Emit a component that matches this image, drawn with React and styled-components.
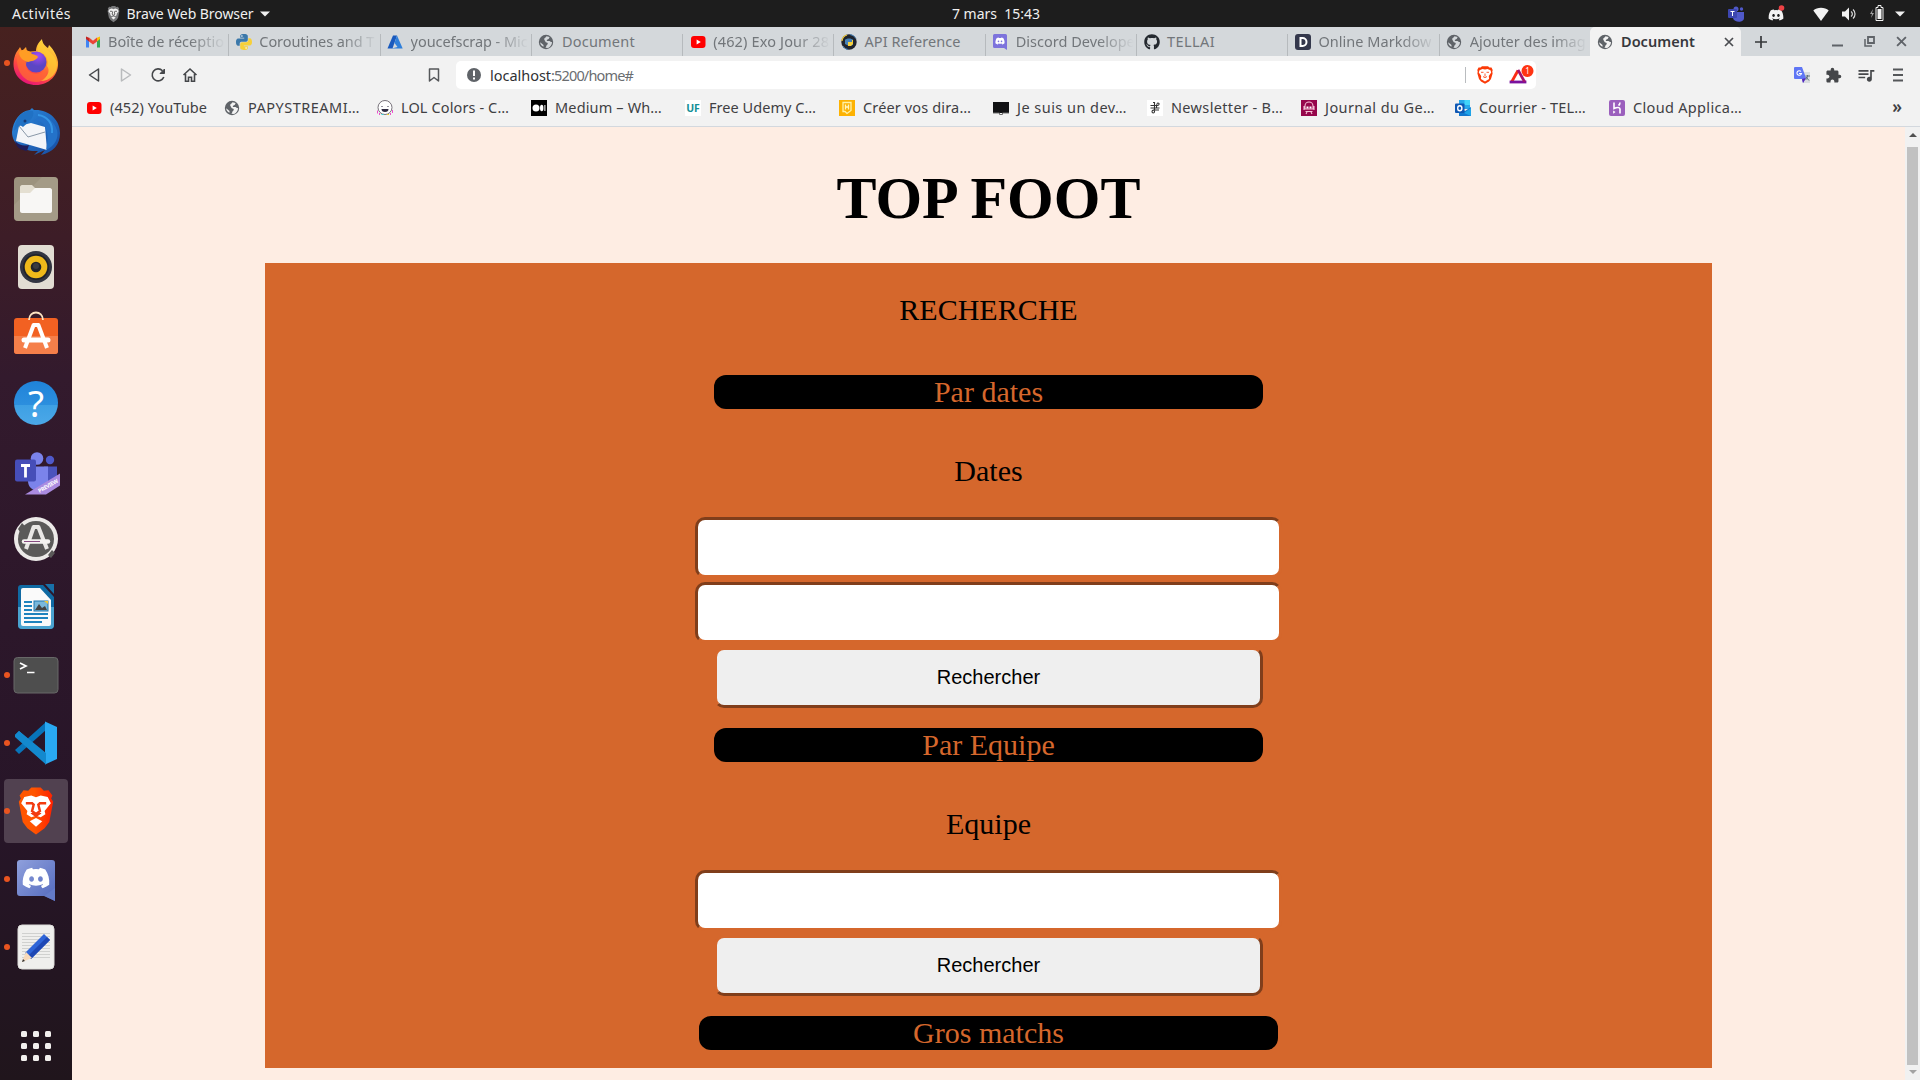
import React, { useLayoutEffect, useRef, useState } from "react";
import styled, { createGlobalStyle, css } from "styled-components";
import { FaDiscord, FaGithub } from "react-icons/fa";
import { MdExtension, MdQueueMusic } from "react-icons/md";

const GlobalStyle = createGlobalStyle`
  * { box-sizing: border-box; }
  body { margin: 0; overflow: hidden; background: #1d1d1d; }
`;

const uiFont = `"Noto Sans", "Open Sans", sans-serif`;
const orange = "#d5672c";
const shade = "#803e1b";

const Desktop = styled.div`
  width: 1920px;
  height: 1080px;
  display: grid;
  grid-template-rows: 27px 1fr;
  font-family: ${uiFont};
  overflow: hidden;
  svg { display: block; flex: none; }
`;

/* ---------- Fitted label ---------- */
const LabelText = styled.span`
  display: inline-block;
  white-space: pre;
  flex: none;
`;

function Label({ width, children }) {
  const ref = useRef(null);
  const [tracking, setTracking] = useState(0);
  useLayoutEffect(() => {
    const natural = ref.current.getBoundingClientRect().width;
    setTracking((width - natural) / children.length);
  }, [width, children]);
  return (
    <LabelText ref={ref} style={{ letterSpacing: tracking }}>
      {children}
    </LabelText>
  );
}

/* ---------- Top bar ---------- */
const TopBar = styled.header`
  display: grid;
  grid-template-columns: 952px 1fr auto;
  align-items: center;
  background: #1d1d1d;
  color: #f0f0f0;
  font-size: 14px;
  line-height: 26px;
`;
const TopLeft = styled.div`
  display: flex;
  align-items: center;
  padding-left: 12px;
`;
const AppMenu = styled.div`
  display: flex;
  align-items: center;
  gap: 6.5px;
  margin-left: 36px;
`;
const Tray = styled.div`
  display: flex;
  align-items: center;
  padding-right: 15px;
`;
const TraySlot = styled.div`
  width: ${(p) => p.$w}px;
  display: flex;
`;

/* ---------- Dock ---------- */
const Body = styled.div`
  display: grid;
  grid-template-columns: 72px 1fr;
  min-height: 0;
`;
const Dock = styled.nav`
  display: flex;
  flex-direction: column;
  padding-top: 2px;
  background: linear-gradient(#47211f 0, #3d1d27 210px, #331a2d 350px, #2c172a 600px, #271528 800px, #20151c 1053px);
`;
const DockItem = styled.div`
  position: relative;
  height: 68px;
  display: flex;
  align-items: center;
  justify-content: center;
  ${(p) =>
    p.$active &&
    css`
      height: 64px;
      margin: 2px 4px;
      border-radius: 4px;
      background: #514150;
    `}
`;
const RunningDot = styled.i`
  position: absolute;
  left: ${(p) => (p.$active ? 0 : 4)}px;
  width: 6px;
  height: 6px;
  border-radius: 50%;
  background: #e95420;
`;
const AppsButton = styled.div`
  display: grid;
  grid-template-columns: repeat(3, 6px);
  grid-auto-rows: 6px;
  gap: 6px;
  justify-content: center;
  margin-top: 50px;
  i { background: #f2f0ee; border-radius: 1.5px; }
`;

/* ---------- Browser ---------- */
const Browser = styled.main`
  display: grid;
  grid-template-rows: 29px 38px 33px 1fr;
  min-width: 0;
  min-height: 0;
  background: #f2f2f2;
`;
const TabStrip = styled.div`
  display: flex;
  background: #d4d8db;
  padding-left: 5px;
  font-size: 14.5px;
  color: #72767a;
`;
const TabBox = styled.div`
  display: flex;
  align-items: center;
  width: 151.3px;
  padding: 0 0 0 7.5px;
  gap: 7.5px;
  position: relative;
  border-radius: ${(p) => (p.$active ? "5px 5px 0 0" : 0)};
  background: ${(p) => (p.$active ? "#f2f2f2" : "transparent")};
  color: ${(p) => (p.$active ? "#37383d" : "inherit")};
  font-weight: ${(p) => (p.$active ? 600 : 400)};
  &::after {
    content: "";
    position: absolute;
    right: -1px;
    top: 7px;
    bottom: 0;
    width: ${(p) => (p.$bare ? 0 : 1)}px;
    background: #b6babd;
  }
`;
const TabTitle = styled.div`
  flex: 1;
  white-space: nowrap;
  line-height: 22px;
  padding-bottom: 2px;
  ${(p) => p.$fade && css`mask-image: linear-gradient(90deg, #000 68%, transparent 98%);`}
`;
const CloseSlot = styled.div`
  margin-right: 7px;
`;
const StripRight = styled.div`
  flex: 1;
  display: flex;
  align-items: center;
  justify-content: space-between;
  padding: 0 13px 0 13px;
`;
const WindowButtons = styled.div`
  display: flex;
  align-items: center;
  gap: 21px;
`;

const Toolbar = styled.div`
  display: flex;
  align-items: center;
  padding-left: 14px;
`;
const NavButtons = styled.div`
  display: flex;
  gap: 16px;
  flex: 1;
`;
const BookmarkButton = styled.div`
  margin-right: 14px;
`;
const AddressBar = styled.div`
  width: 1080px;
  height: 28px;
  display: flex;
  align-items: center;
  padding: 0 2px 0 10px;
  border-radius: 5px;
  background: #fff;
  font-size: 14.5px;
  color: #6a6d70;
  b { color: #303134; font-weight: 400; }
`;
const UrlText = styled.div`
  flex: 1;
  margin-left: 8px;
  padding-bottom: 1px;
`;
const Divider = styled.i`
  width: 1px;
  height: 16px;
  background: #b9bcbf;
  margin-right: 11px;
`;
const ShieldSlot = styled.div`
  margin-right: 16px;
`;
const Extensions = styled.div`
  display: grid;
  grid-template-columns: repeat(4, 16px);
  gap: 16px;
  align-items: center;
  justify-items: center;
  margin-left: 257.5px;
  width: 126.5px;
  color: #45474a;
`;

const BookmarkBar = styled.div`
  display: flex;
  align-items: center;
  padding: 0 18px 4px 14px;
  border-bottom: 1px solid #d3d8de;
  font-size: 14.5px;
  line-height: 22px;
  color: #3f4043;
`;
const Bookmark = styled.div`
  display: flex;
  align-items: center;
  gap: 8px;
  width: ${(p) => p.$w || 154}px;
  span { padding-bottom: 2px; }
`;
const More = styled.div`
  margin-left: auto;
  padding-bottom: 2px;
  font-size: 17px;
  font-weight: 600;
`;

/* ---------- Page ---------- */
const Viewport = styled.div`
  display: grid;
  grid-template-columns: 1fr 15px;
  min-height: 0;
  background: #feede3;
`;
const Page = styled.div`
  font-family: "Liberation Serif", "Times New Roman", serif;
  color: #000;
  padding-top: 37px;
  text-align: center;
`;
const Title = styled.h1`
  margin: 0 0 31px;
  font-size: 60px;
  line-height: 68px;
`;
const Panel = styled.section`
  width: 1447px;
  height: 805px;
  margin: 0 auto;
  padding-top: 30px;
  background: ${orange};
  display: flex;
  flex-direction: column;
  align-items: center;
  font-size: 30px;
  line-height: 34px;
`;
const Caption = styled.p`
  margin: ${(p) => p.$m || "45px 0 29px"};
`;
const Bar = styled.div`
  width: ${(p) => (p.$wide ? 579 : 549)}px;
  height: 34px;
  border-radius: 12px;
  background: #000;
  color: ${orange};
`;
const Form = styled.form`
  display: flex;
  flex-direction: column;
  align-items: center;
  gap: 4px;
  margin-bottom: 20px;
`;
const Field = styled.input`
  width: 587px;
  height: 61px;
  border: 3px solid;
  border-color: ${shade} ${orange} ${orange} ${shade};
  border-radius: 10px;
  background: #fff;
  outline: 0;
`;
const Submit = styled.button`
  width: 549px;
  height: 61px;
  border: 3px solid;
  border-color: ${orange} ${shade} ${shade} ${orange};
  border-radius: 10px;
  background: #efefef;
  color: #000;
  padding: 0;
  font: 20px "Liberation Sans", Arial, sans-serif;
`;
const Scrollbar = styled.div`
  display: flex;
  flex-direction: column;
  align-items: center;
  background: #f1f1f1;
`;
const Arrow = styled.i`
  width: 0;
  border: 4px solid transparent;
  border-top-width: ${(p) => (p.$up ? 0 : 4)}px;
  border-bottom-width: ${(p) => (p.$up ? 4 : 0)}px;
  border-${(p) => (p.$up ? "bottom" : "top")}-color: ${(p) => (p.$up ? "#505050" : "#a3a3a3")};
  margin: ${(p) => (p.$up ? "6px 0 10px" : "5px 0 6px")};
`;
const Thumb = styled.div`
  flex: 1;
  width: 11px;
  background: #c1c1c1;
`;

/* ---------- Small icons ---------- */
const Svg = ({ s = 16, w, h, v = "0 0 16 16", children, ...r }) => (
  <svg width={w || s} height={h || s} viewBox={v} fill="none" {...r}>{children}</svg>
);
const Globe = ({ hole = "#f2f2f2" }) => (
  <Svg>
    <circle cx="8" cy="8" r="7.200" fill="#5f6368" />
    <path d="M8.500 2.300c-.3 1.500-2.500 1.200-2.300 3 .2 1.500 1 1.200 1.200 2.400.2 1.100 2.200.3 2.400 1.700.1 1.300-1.300 1.200-1.500 2.500-.1.900-.5 1.500-1.200 1.900l3 .1c2.400-.9 3.900-3 3.900-5.800-1.300.2-1.500-.9-2.600-1.100-1.200-.2-2.200.5-2.600-.4-.3-.9.900-1.100 1.800-1.600.7-.5.600-1.500 1-2z" fill={hole} />
    <path d="M2.200 8.200 5.500 11v1.700C3.500 12 2.200 10.300 2.200 8.200z" fill={hole} />
  </Svg>
);
const Youtube = () => (
  <Svg><rect x="1" y="2" width="14.5" height="12" rx="3" fill="#f00" /><path d="M6.600 5.500v5L10.800 8z" fill="#fff" /></Svg>
);
const Gmail = () => (
  <Svg>
    <path d="M1 4v9.500h3V7z" fill="#4285f4" /><path d="M15 4v9.500h-3V7z" fill="#34a853" />
    <path d="M12 3.700 15 2.500V5l-3 2.600z" fill="#fbbc04" /><path d="M1 2.500 4 3.700v3.900L1 5z" fill="#c5221f" />
    <path d="m4 3.500 4 3.200 4-3.200v4.100l-4 3-4-3z" fill="#ea4335" />
  </Svg>
);
const Python = () => (
  <Svg>
    <path d="M8 0C4 0 4.200 1.800 4.200 1.800v2h4v.6H2.500S0 4.100 0 8s2.200 3.800 2.200 3.800h1.500V10s-.1-2.200 2.100-2.200h3.900s2.100 0 2.100-2V2.200S12 0 8 0z" fill="#3b78aa" />
    <path d="M8 16c4 0 3.800-1.800 3.800-1.800v-2h-4v-.6h5.700S16 11.900 16 8s-2.200-3.800-2.200-3.800h-1.500V6s.1 2.200-2.100 2.200H6.300s-2.100 0-2.100 2v3.600S4 16 8 16z" fill="#f7d038" />
    <circle cx="5.900" cy="2" r=".8" fill="#fff" /><circle cx="10.100" cy="14" r=".8" fill="#fff" />
  </Svg>
);
const Azure = () => (
  <Svg><path d="M6 1.500h4L5.500 14.500H.5z" fill="#195abe" /><path d="M10 1.500 15.700 14.500H4.500l6-1.500L7.500 9z" fill="#2f7fda" /></Svg>
);
const ApiIcon = () => (
  <Svg><circle cx="8" cy="8" r="7.700" fill="#20242d" /><path d="M2 12a7 7 0 0 0 5 3.500" stroke="#3775ac" /><path d="M1 7a7 7 0 0 1 5-6" stroke="#f6d03c" strokeWidth="1.200" /><path d="M4 6c1-2 7-2 8 0v5l-4 1-4-2z" fill="#4682b8" /><path d="M7 8h4V6h1v4l-2 2H7z" fill="#f6d03c" /><path d="M9 .5a8 8 0 0 1 6 4" stroke="#4682b8" /></Svg>
);
const DiscordTab = () => (
  <Svg><path d="M1 1.500A1.500 1.500 0 0 1 2.500 0h11A1.500 1.500 0 0 1 15 1.500V16l-3-2H2.500A1.500 1.500 0 0 1 1 12.500z" fill="#7d73dc" /><g transform="translate(3 2)"><FaDiscord size={10} color="#fff" /></g></Svg>
);
const DSquare = () => (
  <Svg><rect width="16" height="16" rx="3" fill="#34384c" /><path d="M5.500 4h2a4 4 0 0 1 0 8h-2z" stroke="#fff" strokeWidth="2" /></Svg>
);
const Lol = () => (
  <Svg><circle cx="8" cy="7.500" r="7" fill="#fff" stroke="#77727a" /><path d="M4.500 9h7a3.500 3 0 0 1-7 0z" fill="#302c42" /><path d="M4.500 6.500h1M10.500 6.500h1" stroke="#302c42" /><path d="M.5 10.500v3M2.500 13v2M13.500 13v2M15.500 10v3" stroke="#ed52ce" /><path d="M4.500 14.500h2" stroke="#35d7db" /><path d="M10 14.500h2" stroke="#e9ce29" /></Svg>
);
const Medium = () => (
  <Svg><rect width="16" height="16" fill="#000" /><circle cx="5" cy="8" r="3.500" fill="#fff" /><ellipse cx="10.700" cy="8" rx="1.700" ry="3.300" fill="#fff" /><path d="M13.900 5v6" stroke="#fff" /></Svg>
);
const UfBadge = styled.div`
  width: 16px;
  height: 16px;
  background: #fff;
  color: #159097;
  font: 700 10.5px/16px "Noto Sans", sans-serif;
  text-align: center;
  flex: none;
`;
const Malt = () => (
  <Svg><rect width="16" height="16" fill="#fdb202" /><path d="M4 2.500h8v8l-4 3-2-2H4z" stroke="#fff2a8" strokeWidth="1.300" /><path d="M6.500 4.500v5M9.500 4.500v5M6.500 7h3" stroke="#fff6c4" strokeWidth="1.300" /></Svg>
);
const Screen = () => (
  <Svg><path d="M0 2h16v11H0z" fill="#111214" /><path d="M0 13h6.500v1.500h3V13H16" stroke="#6c6c6c" /></Svg>
);
const Command = () => (
  <Svg><rect width="16" height="16" fill="#fff" /><path d="M6 2.500h1.500v9c0 2-2.500 2-2.500 0s3-1.500 7-1.500M3.500 5.500h7c2 0 2-2.500.5-2.500S9.500 7 9.500 8H3.500M9 8h3.500" stroke="#333" strokeWidth="1.100" /></Svg>
);
const Geek = () => (
  <Svg><rect width="16" height="16" fill="#96064b" /><path d="M4 6a4 4 0 0 1 8 0v3H4zM3 6v4M13 6v4M4.500 11.500h7M5 14l1-2M11 14l-1-2" stroke="#f5bfd5" strokeWidth="1.100" /><path d="M5.500 7.500h5" stroke="#fff" strokeWidth="2" strokeDasharray="2 1" /></Svg>
);
const Outlook = () => (
  <Svg><path d="M4 0h11v9H4z" fill="#28a8ea" /><path d="M9.500 0H15v5H9.500z" fill="#41d5fa" /><path d="m4 7 6 4 6-4v9H4z" fill="#1278cf" /><path d="m16 8-7 5 7 3z" fill="#1fa4e8" /><rect y="3.500" width="9.500" height="9.500" rx="1" fill="#0f58b4" /><ellipse cx="4.800" cy="8.200" rx="2.100" ry="2.500" stroke="#fff" strokeWidth="1.400" /></Svg>
);
const Heroku = () => (
  <Svg><rect width="16" height="16" rx="2" fill="#9b5fbd" /><path d="M5 2.500v6C8 7 11 7 11 9v4.500M11 2.500c0 1.500-.7 2.400-1.500 3" stroke="#fff" strokeWidth="1.600" /><path d="m4.200 10.500 2.300 1.500-2.300 1.700z" fill="#fff" /></Svg>
);
const lionShield = "M9 1 7 3 4 2.700 1.500 6l.8 2L1 10l2.500 13 3 4L12 31l5.500-4 3-4L23 10l-1.300-2 .8-2L20 2.700 17 3 15 1z";
const lionFace = "M12 7.200 15 6l4.500 1 2 4-4 5 .5 2-3 2-3-1-3 1-3-2 .5-2-4-5 2-4L9 6z";
const LionMark = ({ w, h, fill, face = "#fff", line = "#f23b10" }) => (
  <Svg w={w} h={h} v="0 0 24 32">
    <path d={lionShield} fill={fill} /><path d={lionFace} fill={face} />
    <path d="M5.500 11h4l1 1-1 4 2.500 2 2.500-2-1-4 1-1h4M9 17l3 2 3-2" stroke={line} strokeWidth="1.600" />
    <path d="m12 20.500 4 2-4 3.500-4-3.500z" fill={face} />
  </Svg>
);
const LionSmall = () => (
  <Svg w={16} h={18} v="0 0 16 18">
    <path d="M5 .3h6l1.500 1.200h2L15.700 4l-.4 1.500.3 2L14 13l-2 2.500L8 17.800 4 15.500 2 13 .4 7.500l.3-2L.3 4l1.200-2.500h2z" fill="#fb3a08" />
    <path d="M8 3.500 10.500 3l3 1.200.7 2.300-2.400 3.500.3 3L8 15.500 3.900 13l.3-3-2.400-3.500.7-2.300 3-1.200z" fill="#fff" />
    <path d="M4 6.300h2.500M9.500 6.300H12M8 7.500v3M6 10.500l2 1.200 2-1.200" stroke="#fb4a1c" strokeWidth=".9" />
  </Svg>
);
const Bat = () => (
  <Svg w={25} h={22} v="0 0 25 22">
    <path d="M9 6.500 2.600 18" stroke="#fa2c14" strokeWidth="2.800" />
    <path d="M.6 18h16.800" stroke="#7a129e" strokeWidth="2.800" /><path d="m9 5.800 6.600 12" stroke="#a3126e" strokeWidth="2.800" />
    <circle cx="18.500" cy="7" r="6" fill="#ff3413" />
    <text x="18.500" y="9.800" fill="#fff" fontSize="8" textAnchor="middle" fontFamily="Noto Sans, sans-serif">1</text>
  </Svg>
);
const Caret = () => <Svg w={10} h={6} v="0 0 10 6"><path d="M0 .5h10L5 5.500z" fill="#f0f0f0" /></Svg>;
const Cross = ({ s = 10, c = "#4a4c50" }) => <Svg s={s} v="0 0 10 10"><path d="m1 1 8 8M9 1 1 9" stroke={c} strokeWidth="1.700" /></Svg>;

/* ---------- Dock icons (48px box) ---------- */
const D = ({ children }) => <Svg s={48} v="0 0 48 48">{children}</Svg>;
const Firefox = () => (
  <D>
    <defs>
      <linearGradient id="ff" x1=".8" y1="0" x2=".3" y2="1"><stop stopColor="#ffe94a" /><stop offset=".4" stopColor="#ff9a2a" /><stop offset=".7" stopColor="#ff4a3f" /><stop offset="1" stopColor="#e5117c" /></linearGradient>
      <radialGradient id="ffp" cx=".6" cy=".2"><stop stopColor="#a34bf5" /><stop offset="1" stopColor="#5b46c4" /></radialGradient>
    </defs>
    <path d="M4 14c1-2 3-4 4-6l2 4 4-4 1 4c4 1 6 0 9 0 0-5 3-9 6-12 0 4 3 7 6 9l1-3c3 3 8 9 9 17 1 13-9 23-22 23S1.500 37 1.500 25c0-4 1-8 2.500-11z" fill="url(#ff)" />
    <path d="M30 1c-5 5-5 10-4 12 8 1 11 8 9 14 4 5 0 12-7 15 11 0 17-8 17-16 0-12-13-13-15-25z" fill="#ffce36" opacity=".75" />
    <circle cx="24" cy="23" r="10.500" fill="url(#ffp)" />
    <path d="M5 17c5-2 9 0 12 3-4 3-4 9 0 12 4 4 12 4 16-2 4 5 0 13-9 13C11 43 4 31 5 17z" fill="#ff6a34" opacity=".75" />
    <path d="M7 13c4-4 10-2 13 2 3 1 5 1 6 3-2 4-7 4-10 5-4-1-9-4-9-10z" fill="#ff9d24" />
  </D>
);
const Thunderbird = () => (
  <D>
    <defs><linearGradient id="tb" x1="0" y1="0" x2="1" y2="1"><stop stopColor="#2c8ce0" /><stop offset="1" stopColor="#174ba0" /></linearGradient></defs>
    <path d="M0 25C1 14 8 4 18 3l2-2 2 2c14-1 26 9 26 23 0 12-7 19-19 22l4-5-11 5 4-4C12 45 0 38 0 25z" fill="url(#tb)" />
    <path d="M3 34c5 5 9 5 14 4l-2 6C8 43 4 40 3 34z" fill="#201d58" />
    <path d="M7 19 19 16l14 4 2 23L4 34z" fill="#f3f5f8" /><path d="m7 19 9 11 17-5" stroke="#8998a8" />
    <path d="M2 24C3 9 12 2 21 4c2 5-3 10-10 16l-3-2z" fill="#2071c4" /><circle cx="13" cy="14" r="1.500" fill="#153c78" />
    <path d="M20 15c8-5 20 4 14 28 9-4 13-12 11-20C40 9 28 7 20 15z" fill="#2472c9" />
    <path d="M26 8c9 1 15 8 14 18" stroke="#3596e6" strokeWidth="2" />
  </D>
);
const Files = () => (
  <D><rect x="2" y="2" width="44" height="44" rx="4" fill="#9c937e" /><path d="M2 30 30 2h12a4 4 0 0 1 4 4v36a4 4 0 0 1-4 4H6a4 4 0 0 1-4-4z" fill="#aba38f" opacity=".5" /><path d="M8 12c0-1 1-2 2-2h10l4 4v6H8z" fill="#e4dfd1" /><path d="M8 18h10l5-5h15c1 0 2 1 2 2v21c0 1-1 2-2 2H10c-1 0-2-1-2-2z" fill="#f8f7f5" /></D>
);
const Rhythmbox = () => (
  <D><rect x="6" y="2" width="36" height="44" rx="4" fill="#e2ddd3" /><circle cx="24" cy="24" r="16" fill="#323541" /><circle cx="24" cy="24" r="13" fill="#20222a" /><circle cx="24" cy="24" r="11.300" fill="#efb91a" /><circle cx="24" cy="24" r="5.300" fill="#22242a" /><circle cx="24" cy="23" r="3" fill="#393b40" /></D>
);
const Store = () => (
  <D><rect x="2" y="7" width="44" height="36" rx="3" fill="#f26122" /><path d="M2 25h44v15a3 3 0 0 1-3 3H5a3 3 0 0 1-3-3z" fill="#f57f4a" /><path d="M17 9c0-10 14-10 14 0" stroke="#fde3c2" strokeWidth="1.800" /><path d="m22 13-9 24M26 13l9 24M21 14h6" stroke="#fff" strokeWidth="4" /><path d="M12 29h24" stroke="#fff" strokeWidth="5" strokeLinecap="round" /></D>
);
const HelpGlyph = styled.div`
  width: 44px;
  height: 44px;
  border-radius: 50%;
  background: linear-gradient(#1f83d9 0, #2c8fde 54%, #3ea0e4 55%, #4ba8e8);
  color: #fff;
  font: 37px/43px "Noto Sans", sans-serif;
  text-align: center;
`;
const Teams = () => (
  <D>
    <g transform="translate(0 3.500)">
      <circle cx="25" cy="8" r="6.300" fill="#7b83eb" /><circle cx="38" cy="9.500" r="4.200" fill="#4f59ca" />
      <path d="M32 16h13v14c0 6-5 9-10 9z" fill="#4b53bc" /><path d="M16 16h20v15c0 12-19 13-20 0z" fill="#7b83eb" />
      <rect x="3" y="9" width="21" height="22" rx="2" fill="#464eb8" />
      <path d="M9 15h9M13.500 15v12" stroke="#fff" strokeWidth="2.800" />
      <path d="M13 44 48 23v12L34 44z" fill="#ab8be0" />
      <text transform="translate(27.500 42.500) rotate(-30)" fontFamily="Noto Sans, sans-serif" fontSize="5.500" fontWeight="700" fill="#fff" textLength="22">PREVIEW</text>
    </g>
  </D>
);
const Updater = () => (
  <D><circle cx="24" cy="24" r="22" fill="#eceae8" /><circle cx="24" cy="24" r="18" fill="#5b5a59" /><path d="m6 14 4-6 3 3-5 6zM36 40l4-5 3 3-4 5z" fill="#5b5a59" /><path d="m22 11-8 23M26 11l9 23M21 12h6" stroke="#e9e7e5" strokeWidth="4" /><path d="M12 26.500h24" stroke="#f4f2f0" strokeWidth="4.500" strokeLinecap="round" /><path d="M12 26.500h16" stroke="#864b80" /></D>
);
const Writer = () => (
  <D><path d="M9 2h22l11 12v28a4 4 0 0 1-4 4H10a4 4 0 0 1-4-4V5a3 3 0 0 1 3-3z" fill="#106aa3" /><path d="M6 24h36v18a4 4 0 0 1-4 4H10a4 4 0 0 1-4-4z" fill="#4aa3d0" /><path d="M9 7a2 2 0 0 1 2-2h17l11 12v24a2 2 0 0 1-2 2H11a2 2 0 0 1-2-2z" fill="#fafafa" /><path d="M33 1h9v10z" fill="#1870a8" /><path d="M12 19h8M12 23h8M12 27h8M12 31h24M12 35h24M12 39h18" stroke="#1e83be" strokeWidth="2" /><rect x="22" y="18" width="14" height="10" fill="#79b8dc" stroke="#1e76ad" /><path d="m23 27 4-6 3 4 3-2 2 4z" fill="#444" /><path d="M32 18h4v3z" fill="#f6c933" /></D>
);
const Terminal = () => (
  <D><rect x="2" y="6.500" width="44" height="35.500" rx="3.500" fill="#4e4e4e" stroke="#686868" /><path d="m8 12 6 3-6 3M15 21.500h7.500" stroke="#fff" strokeWidth="1.700" /></D>
);
const Code = () => (
  <D><path d="m3 31 4 4 27-24V3z" fill="#0874ba" /><path d="m3 16 4-4 27 24v9L3 17z" fill="#1595dc" /><path d="M33 2.500 45 8v32l-12 5.500z" fill="#29a9f2" /><path d="M7 12 34 34v11.500L3 18v-2z" fill="#1389ce" /></D>
);
const DiscordDock = () => (
  <D><defs><linearGradient id="dc" x1="0" y1="0" x2="1" y2="1"><stop stopColor="#8fa0dc" /><stop offset="1" stopColor="#5369be" /></linearGradient></defs><path d="M8 5h32a3 3 0 0 1 3 3v38l-10-5H8a3 3 0 0 1-3-3V8a3 3 0 0 1 3-3z" fill="url(#dc)" /><path d="m32 41 11 5V33z" fill="#647bc8" /><g transform="translate(9.500 8.500)"><FaDiscord size={29} color="#fff" /></g></D>
);
const Editor = () => (
  <D><rect x="6" y="2" width="36" height="44" rx="4" fill="#efefed" stroke="#dededb" /><path d="M10 10.500h28M10 13.500h28M10 16.500h28M10 19.500h28M10 22.500h28M10 25.500h28M10 28.500h28M10 31.500h28M10 34.500h28" stroke="#cccdcc" strokeWidth=".9" /><path d="m32 11 6 6-19 19-6-6z" fill="#2e65d8" /><path d="m35 14 3 3-19 19-3-3z" fill="#1d47b4" /><path d="m14 29 6 6-10 4z" fill="#f7d9b9" /><path d="m11 36 2 2-3 1z" fill="#333" /></D>
);
const BraveDock = () => (
  <D><defs><linearGradient id="bv"><stop offset=".45" stopColor="#ff5500" /><stop offset="1" stopColor="#ff2000" /></linearGradient></defs><g transform="translate(3 -1)"><LionMark w={42} h={50} fill="url(#bv)" /></g></D>
);

const dockItems = [
  { icon: <Firefox />, running: true },
  { icon: <Thunderbird /> },
  { icon: <Files /> },
  { icon: <Rhythmbox /> },
  { icon: <Store /> },
  { icon: <HelpGlyph>?</HelpGlyph> },
  { icon: <Teams /> },
  { icon: <Updater /> },
  { icon: <Writer /> },
  { icon: <Terminal />, running: true },
  { icon: <Code />, running: true },
  { icon: <BraveDock />, running: true, active: true },
  { icon: <DiscordDock />, running: true },
  { icon: <Editor />, running: true },
];

const tabs = [
  { icon: <Gmail />, title: "Boîte de réceptio", w: 116, fade: true },
  { icon: <Python />, title: "Coroutines and T", w: 115, fade: true },
  { icon: <Azure />, title: "youcefscrap - Mic", w: 117, fade: true },
  { icon: <Globe hole="#d4d8db" />, title: "Document", w: 73 },
  { icon: <Youtube />, title: "(462) Exo Jour 28", w: 116, fade: true },
  { icon: <ApiIcon />, title: "API Reference", w: 96 },
  { icon: <DiscordTab />, title: "Discord Develope", w: 119, fade: true },
  { icon: <FaGithub size={16} color="#24292f" />, title: "TELLAI", w: 48 },
  { icon: <DSquare />, title: "Online Markdow", w: 113, fade: true },
  { icon: <Globe hole="#d4d8db" />, title: "Ajouter des imag", w: 116, fade: true },
];

const bookmarks = [
  { icon: <Youtube />, title: "(452) YouTube", w: 97, slot: 138 },
  { icon: <Globe />, title: "PAPYSTREAMI…", w: 112, slot: 153 },
  { icon: <Lol />, title: "LOL Colors - C…", w: 108 },
  { icon: <Medium />, title: "Medium – Wh…", w: 107 },
  { icon: <UfBadge>UF</UfBadge>, title: "Free Udemy C…", w: 107 },
  { icon: <Malt />, title: "Créer vos dira…", w: 108 },
  { icon: <Screen />, title: "Je suis un dev…", w: 110 },
  { icon: <Command />, title: "Newsletter - B…", w: 112 },
  { icon: <Geek />, title: "Journal du Ge…", w: 110 },
  { icon: <Outlook />, title: "Courrier - TEL…", w: 107 },
  { icon: <Heroku />, title: "Cloud Applica…", w: 109 },
];

export default function App() {
  return (
    <Desktop>
      <GlobalStyle />
      <TopBar>
        <TopLeft>
          <Label width={59}>Activités</Label>
          <AppMenu>
            <LionMark w={13} h={18} fill="#77787a" face="#f2f2f2" line="#555" />
            <Label width={127}>Brave Web Browser</Label>
            <Caret />
          </AppMenu>
        </TopLeft>
        <div><Label width={88}>{"7 mars  15:43"}</Label></div>
        <Tray>
          <TraySlot $w={40}>
            <Svg><circle cx="8" cy="3" r="2.500" fill="#5059c9" /><circle cx="13.500" cy="3" r="1.700" fill="#5059c9" /><path d="M5 6h11v6c0 5-10 5-11 0z" fill="#5059c9" /><rect y="3" width="9" height="9" rx="1" fill="#3d46b0" /><path d="M2.500 5.500h4M4.500 5.500v4.500" stroke="#fff" /></Svg>
          </TraySlot>
          <TraySlot $w={45}>
            <Svg w={17} h={18} v="0 0 17 18"><g transform="translate(0 2)"><FaDiscord size={16} color="#f2f2f2" /></g><circle cx="13.500" cy="3" r="2.800" fill="#ed4245" /></Svg>
          </TraySlot>
          <TraySlot $w={28}><Svg><path d="M.3 4.500C4 .7 12 .7 15.700 4.500L8 15z" fill="#f2f2f2" /></Svg></TraySlot>
          <TraySlot $w={28}>
            <Svg><path d="M1 5.500h3l4-4v13l-4-4H1z" fill="#f2f2f2" /><path d="M10 5.500a3 3 0 0 1 0 5M12 3.500a6 6 0 0 1 0 9" stroke="#ddd" strokeWidth="1.200" /></Svg>
          </TraySlot>
          <TraySlot $w={26}>
            <Svg w={17} h={17} v="0 0 17 17"><path d="m4 4-3 5h2l-1 4 3-5H3z" fill="#a0a0a0" /><path d="M9 .5h3v2h2v13H7v-13h2z" stroke="#f2f2f2" /><path d="M8.500 4h4v10h-4z" fill="#f2f2f2" /></Svg>
          </TraySlot>
          <Caret />
        </Tray>
      </TopBar>
      <Body>
        <Dock>
          {dockItems.map((item, i) => (
            <DockItem key={i} $active={item.active}>
              {item.running && <RunningDot $active={item.active} />}
              {item.icon}
            </DockItem>
          ))}
          <AppsButton>{Array.from({ length: 9 }, (_, i) => <i key={i} />)}</AppsButton>
        </Dock>
        <Browser>
          <TabStrip>
            {tabs.map((t, i) => (
              <TabBox key={i} $bare={i === tabs.length - 1}>
                {t.icon}
                <TabTitle $fade={t.fade}><Label width={t.w}>{t.title}</Label></TabTitle>
              </TabBox>
            ))}
            <TabBox $active $bare>
              <Globe />
              <TabTitle><Label width={74}>Document</Label></TabTitle>
              <CloseSlot><Cross /></CloseSlot>
            </TabBox>
            <StripRight>
              <Svg s={14} v="0 0 14 14"><path d="M7 1v12M1 7h12" stroke="#36383b" strokeWidth="1.700" /></Svg>
              <WindowButtons>
                <Svg s={11} v="0 0 11 11"><path d="M0 9.500h11" stroke="#5f6368" strokeWidth="2" /></Svg>
                <Svg s={11} v="0 0 11 11"><path d="M4 1h6v6H4z" stroke="#5f6368" strokeWidth="1.800" /><path d="M1 3v7h7" stroke="#5f6368" strokeWidth="1.500" /></Svg>
                <Cross s={11} c="#5f6368" />
              </WindowButtons>
            </StripRight>
          </TabStrip>
          <Toolbar>
            <NavButtons>
              <Svg><path d="M12.500 2v12L3.500 8z" stroke="#45474a" strokeWidth="1.500" strokeLinejoin="round" /></Svg>
              <Svg><path d="M3.500 2v12l9-6z" stroke="#b9bbbd" strokeWidth="1.500" strokeLinejoin="round" /></Svg>
              <Svg><path d="M12.500 3.700A6 6 0 1 0 13.800 10" stroke="#45474a" strokeWidth="1.600" /><path d="M14.500 2v4.500H10z" fill="#45474a" stroke="#45474a" strokeLinejoin="round" /></Svg>
              <Svg><path d="M1.500 8 8 2l6.500 6M3.500 7v7.200h3v-4h3v4h3V7" stroke="#45474a" strokeWidth="1.600" /></Svg>
            </NavButtons>
            <BookmarkButton>
              <Svg><path d="M3.500 2h9v12L8 10.500 3.500 14z" stroke="#55575a" strokeWidth="1.500" strokeLinejoin="round" /></Svg>
            </BookmarkButton>
            <AddressBar>
              <Svg><circle cx="8" cy="8" r="7" fill="#5f6368" /><path d="M8 3.500V9M8 10.500v2" stroke="#fff" strokeWidth="2" /></Svg>
              <UrlText>
                <b><Label width={61}>localhost</Label></b>
                <Label width={82}>:5200/home#</Label>
              </UrlText>
              <Divider />
              <ShieldSlot><LionSmall /></ShieldSlot>
              <Bat />
            </AddressBar>
            <Extensions>
              <Svg><path d="M8 5h8v11H9z" fill="#d9dcdf" /><path d="M1 0h7l4 11-3 5-1-4H1a1 1 0 0 1-1-1V1a1 1 0 0 1 1-1z" fill="#5f76f5" /><path d="m8 12 4-1-3 5z" fill="#5a27b5" /><path d="M7 4.500a2.300 2.300 0 1 0 .5 2H5" stroke="#fff" strokeWidth="1.100" /><path d="M11.500 9H16M13.500 8v1c0 2-1 3-2 4M12 10l3 3.500" stroke="#60717c" /></Svg>
              <MdExtension size={17} />
              <MdQueueMusic size={20} />
              <Svg><path d="M3 2.500h10M3 8h10M3 13.500h10" stroke="#55575a" strokeWidth="1.900" /></Svg>
            </Extensions>
          </Toolbar>
          <BookmarkBar>
            {bookmarks.map((b) => (
              <Bookmark key={b.title} $w={b.slot}>
                {b.icon}
                <Label width={b.w}>{b.title}</Label>
              </Bookmark>
            ))}
            <More>»</More>
          </BookmarkBar>
          <Viewport>
            <Page>
              <Title>TOP FOOT</Title>
              <Panel>
                <Caption $m="0 0 48px">RECHERCHE</Caption>
                <Bar>Par dates</Bar>
                <Caption>Dates</Caption>
                <Form>
                  <Field />
                  <Field />
                  <Submit type="button">Rechercher</Submit>
                </Form>
                <Bar>Par Equipe</Bar>
                <Caption>Equipe</Caption>
                <Form>
                  <Field />
                  <Submit type="button">Rechercher</Submit>
                </Form>
                <Bar $wide>Gros matchs</Bar>
              </Panel>
            </Page>
            <Scrollbar>
              <Arrow $up />
              <Thumb />
              <Arrow />
            </Scrollbar>
          </Viewport>
        </Browser>
      </Body>
    </Desktop>
  );
}
